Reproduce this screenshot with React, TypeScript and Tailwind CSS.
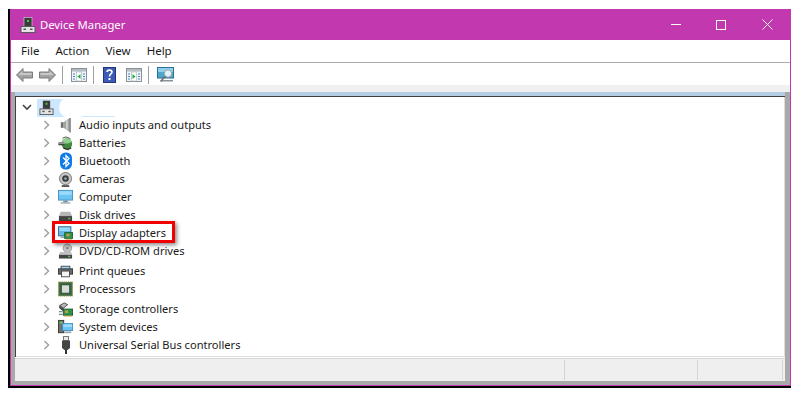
const font = { fontFamily: '"Noto Sans", "Open Sans", sans-serif' };

function Chevron() {
  return (
    <svg width="8" height="10" viewBox="0 0 8 10" className="shrink-0">
      <path d="M1.5 1 L5.5 5 L1.5 9" fill="none" stroke="#a6a6a6" strokeWidth="1.6" />
    </svg>
  );
}

function HostIcon({ size = 16 }: { size?: number }) {
  return (
    <svg width={size} height={size} viewBox="0 0 16 16">
      <rect x="4" y="0.5" width="8" height="9.5" fill="#3a3a3a" stroke="#d8d8d8" strokeWidth="0.6" />
      <rect x="7" y="3" width="2" height="2" fill="#46d246" />
      <rect x="1" y="9.5" width="14" height="6" fill="#e4e4e4" stroke="#5a5a5a" />
      <rect x="3.5" y="11.5" width="2.5" height="1.5" fill="#555" />
      <rect x="10" y="11.5" width="2.5" height="1.5" fill="#555" />
    </svg>
  );
}

function Speaker() {
  return (
    <svg width="16" height="18" viewBox="0 0 16 18">
      <rect x="3" y="6" width="3" height="6" fill="#6f6f6f" />
      <path d="M6 6 L13 1 V17 L6 12 Z" fill="#a2a2a2" />
      <path d="M9.5 4 V14" stroke="#dcdcdc" strokeWidth="1.6" />
      <path d="M13 1 V17" stroke="#666" />
    </svg>
  );
}

function Battery() {
  return (
    <svg width="17" height="17" viewBox="0 0 17 17">
      <ellipse cx="10" cy="9" rx="6" ry="6.5" fill="#3f8a3f" />
      <ellipse cx="10" cy="5.5" rx="5" ry="3" fill="#8fd08f" />
      <path d="M5 2.5 L9 1 L14 3" stroke="#444" fill="none" />
      <rect x="0.5" y="7" width="7" height="3.5" fill="#444" />
      <path d="M0.5 8 H8" stroke="#e2e2e2" />
      <path d="M6 13.5 L11 15.5 L15 13.5" stroke="#333" fill="none" strokeWidth="1.4" />
    </svg>
  );
}

function BluetoothIcon() {
  return (
    <svg width="14" height="18" viewBox="0 0 14 18">
      <rect x="1" y="0.5" width="12" height="17" rx="5.5" fill="#0f7be8" />
      <path d="M4 5.5 L10 11.5 L7 14.5 V3.5 L10 6.5 L4 12.5" fill="none" stroke="#fff" strokeWidth="1.3" />
    </svg>
  );
}

function Camera() {
  return (
    <svg width="15" height="17" viewBox="0 0 16 17">
      <circle cx="8" cy="7.5" r="6.5" fill="#c6c6c6" stroke="#777" />
      <circle cx="8" cy="7.5" r="3.5" fill="#3b3b3b" />
      <circle cx="8" cy="7.5" r="1.5" fill="#8fa3b5" />
      <path d="M4 15.5 H12" stroke="#555" strokeWidth="2" />
    </svg>
  );
}

function Computer() {
  return (
    <svg width="17" height="16" viewBox="0 0 17 16">
      <rect x="0.5" y="0.5" width="16" height="11" fill="#6cc4f2" stroke="#3f8fc0" />
      <rect x="1.5" y="1.5" width="14" height="4" fill="#9cdcfa" />
      <rect x="6" y="12" width="5" height="2" fill="#7a8a96" />
      <rect x="3" y="14" width="11" height="1.5" fill="#9aa7b0" />
    </svg>
  );
}

function Disk() {
  return (
    <svg width="16" height="12" viewBox="0 0 16 12" className="mt-[4px]">
      <path d="M3 0.5 H13 L15 5 H1 Z" fill="#b5b5b5" />
      <rect x="1" y="5" width="14" height="6.5" fill="#444" />
      <rect x="11" y="7" width="2" height="1.5" fill="#5cd65c" />
    </svg>
  );
}

function Display() {
  return (
    <svg width="18" height="16" viewBox="0 0 18 16">
      <rect x="0.5" y="0.5" width="15" height="11" fill="#62b8e8" stroke="#2f5f85" />
      <rect x="1.5" y="1.5" width="13" height="4" fill="#97d8f8" />
      <rect x="3" y="12" width="8" height="2" fill="#9aa7b0" />
      <rect x="8" y="7.5" width="9.5" height="7" fill="#2f8f4f" stroke="#1c5c30" />
      <rect x="10" y="9" width="4" height="3" fill="#c2a23c" />
      <path d="M9 15.5 H17" stroke="#c9a83f" />
    </svg>
  );
}

function Dvd() {
  return (
    <svg width="16" height="17" viewBox="0 0 16 17">
      <circle cx="10" cy="5" r="4.5" fill="#c6c6c6" stroke="#999" />
      <circle cx="10" cy="5" r="1.2" fill="#777" />
      <path d="M2 9 H14 L15 12 H1 Z" fill="#c0c0c0" />
      <rect x="1" y="12" width="14" height="4" fill="#444" />
      <rect x="11" y="13" width="2" height="1.5" fill="#5cd65c" />
    </svg>
  );
}

function Printer() {
  return (
    <svg width="17" height="13" viewBox="0 0 17 13">
      <rect x="3.5" y="0.5" width="10" height="4" fill="#9cd4f0" stroke="#444" />
      <rect x="0.5" y="3.5" width="16" height="6" fill="#6a6a6a" stroke="#333" />
      <rect x="4" y="6" width="9" height="6.5" fill="#f4f4f4" stroke="#444" />
    </svg>
  );
}

function Processor() {
  return (
    <svg width="16" height="16" viewBox="0 0 16 16">
      <rect x="0.5" y="0.5" width="15" height="15" fill="#4d7a55" stroke="#a08c3c" strokeDasharray="1.2 0.8" />
      <rect x="1.5" y="1.5" width="13" height="13" fill="#3c6a48" />
      <rect x="3.5" y="3.5" width="9" height="9" fill="#d6dcd6" stroke="#2c4a34" />
    </svg>
  );
}

function Storage() {
  return (
    <svg width="17" height="17" viewBox="0 0 17 17">
      <path d="M2 4 L7 1 L11 3 L6 7 Z" fill="#b8b8b8" stroke="#444" />
      <path d="M2 4 V7 L6 10 V7" fill="#555" stroke="#333" />
      <rect x="6" y="8" width="10.5" height="7" fill="#2f8f4f" stroke="#1c5c30" />
      <rect x="8" y="9.5" width="3.5" height="3" fill="#c2a23c" />
      <path d="M7 16 H16" stroke="#c9a83f" />
      <path d="M1 11 H5 M1 14 H5" stroke="#555" />
    </svg>
  );
}

function SystemIcon() {
  return (
    <svg width="17" height="16" viewBox="0 0 17 16">
      <rect x="0.5" y="0.5" width="6" height="14" fill="#707070" stroke="#333" />
      <rect x="2" y="2" width="3" height="2" fill="#5cd65c" />
      <rect x="5" y="4" width="11.5" height="8" fill="#6cc4f2" stroke="#3f8fc0" />
      <rect x="6" y="5" width="10" height="3" fill="#9cdcfa" />
      <rect x="7" y="13" width="8" height="2" fill="#9aa7b0" />
    </svg>
  );
}

function Usb() {
  return (
    <svg width="10" height="18" viewBox="0 0 10 18">
      <rect x="2.5" y="0.5" width="5" height="4" fill="#e8e8e8" stroke="#777" />
      <path d="M1 4.5 H9 V12 L6.5 14 H3.5 L1 12 Z" fill="#454545" />
      <rect x="4" y="14" width="2" height="4" fill="#333" />
    </svg>
  );
}

function Arrow({ flip }: { flip?: boolean }) {
  return (
    <svg width="17" height="14" viewBox="0 0 17 14" style={{ transform: flip ? "scaleX(-1)" : undefined }}>
      <path d="M0.5 7 L7 0.5 V4 H16.5 V10 H7 V13.5 Z" fill="#a2a2a2" stroke="#7c7c7c" />
      <path d="M2.5 7 L6.5 3 V5 H15.5 V7 Z" fill="#c8c8c8" />
    </svg>
  );
}

function PaneIcon({ right }: { right?: boolean }) {
  return (
    <svg width="16" height="14" viewBox="0 0 16 14">
      <rect x="0.5" y="0.5" width="15" height="13" fill="#eef3f6" stroke="#8a9299" />
      <rect x="1" y="1" width="14" height="2.5" fill="#b5bcc2" />
      <rect x="5.5" y="4" width="5" height="9" fill="#fff" stroke="#a8b0b6" strokeWidth="0.6" />
      <path d="M2 6 H4 M2 8.5 H4 M2 11 H4 M12 6 H14 M12 8.5 H14 M12 11 H14" stroke="#4a87c0" />
      {right ? <path d="M6.5 6 L9.5 8.5 L6.5 11 Z" fill="#1faa3c" /> : <path d="M9.5 6 L6.5 8.5 L9.5 11 Z" fill="#1faa3c" />}
    </svg>
  );
}

function HelpIcon() {
  return (
    <svg width="13" height="16" viewBox="0 0 13 16">
      <rect x="0.5" y="0.5" width="12" height="15" fill="#3b5bb5" stroke="#24357a" />
      <path d="M4 5 C4 2.5 9 2.5 9 5 C9 7 6.5 7 6.5 9.5" fill="none" stroke="#fff" strokeWidth="1.6" />
      <rect x="5.5" y="11" width="2" height="2" fill="#fff" />
    </svg>
  );
}

function ScanIcon() {
  return (
    <svg width="17" height="16" viewBox="0 0 17 16">
      <rect x="0.5" y="0.5" width="16" height="10.5" fill="#4ea6cc" stroke="#2b6f92" />
      <rect x="1" y="1" width="15" height="4" fill="#8fd0ec" />
      <rect x="4" y="13" width="12" height="1.5" fill="#8a9299" />
      <circle cx="11" cy="6.5" r="3.7" fill="#dff3fb" stroke="#9a9a9a" strokeWidth="0.9" />
      <path d="M8.3 9.2 L3.5 14.5" stroke="#6e6e6e" strokeWidth="1.6" />
    </svg>
  );
}

const Sep = () => <div className="w-px h-[18px] bg-[#a0a0a0]" />;

const rows: { label: string; icon: React.ReactNode; extra?: boolean }[] = [
  { label: "Audio inputs and outputs", icon: <Speaker /> },
  { label: "Batteries", icon: <Battery /> },
  { label: "Bluetooth", icon: <BluetoothIcon /> },
  { label: "Cameras", icon: <Camera /> },
  { label: "Computer", icon: <Computer /> },
  { label: "Disk drives", icon: <Disk /> },
  { label: "Display adapters", icon: <Display /> },
  { label: "DVD/CD-ROM drives", icon: <Dvd /> },
  { label: "Print queues", icon: <Printer />, extra: true },
  { label: "Processors", icon: <Processor /> },
  { label: "Storage controllers", icon: <Storage />, extra: true },
  { label: "System devices", icon: <SystemIcon /> },
  { label: "Universal Serial Bus controllers", icon: <Usb /> },
];

export default function App() {
  return (
    <div className="w-[800px] h-[400px] bg-white pl-[8px] pt-[9px] overflow-hidden" style={font}>
      <div className="relative w-[783px] h-[379px] flex flex-col border-l-2 border-b-2 border-black">
        <div className="h-[31px] bg-[#c238ae] flex items-center text-white text-[11.25px] pl-[10px]">
          <HostIcon />
          <span className="ml-[4px] pt-[2px]">Device Manager</span>
          <div className="ml-auto flex items-center">
            <div className="w-[10px] h-px bg-white mr-[35px]" />
            <div className="w-[10px] h-[10px] border border-white mr-[36px]" />
            <svg width="11" height="11" viewBox="0 0 11 11" className="mr-[18px]">
              <path d="M0.5 0.5 L10.5 10.5 M10.5 0.5 L0.5 10.5" stroke="#fff" />
            </svg>
          </div>
        </div>
        <div className="flex-1 flex flex-col border-l border-r border-b border-[#c238ae]">
          <div className="h-[22px] bg-white flex items-center text-[11.5px] text-[#1a1a1a] border-b border-[#ababab] box-content pl-[10px] gap-[16px]">
            <span>File</span>
            <span>Action</span>
            <span>View</span>
            <span>Help</span>
          </div>
          <div className="h-[22px] bg-white flex items-center pl-[5px] pt-[2px]">
            <Arrow />
            <div className="w-[6px]" />
            <Arrow flip />
            <div className="w-[6px]" />
            <Sep />
            <div className="w-[8px]" />
            <PaneIcon />
            <div className="w-[6px]" />
            <Sep />
            <div className="w-[9px]" />
            <HelpIcon />
            <div className="w-[10px]" />
            <PaneIcon right />
            <div className="w-[6px]" />
            <Sep />
            <div className="w-[8px]" />
            <ScanIcon />
          </div>
          <div className="h-[7px] bg-[#f0f0f0]" />
          <div className="flex-1 bg-[#a9a9a9] flex flex-col pl-[4px] pr-[5px] pb-[4px]">
            <div className="h-[4px] bg-[#b4cde4]" />
            <div className="h-[261px] bg-white border-t border-l border-[#404040] border-r-0 relative overflow-hidden">
              <div className="h-[19px] flex items-center pt-[2px]">
                <svg width="10" height="7" viewBox="0 0 10 7" className="ml-[6px]">
                  <path d="M1 1 L5 5 L9 1" fill="none" stroke="#444" strokeWidth="1.6" />
                </svg>
                <div className="relative ml-[5px] w-[78px] h-[18px] bg-[#cce8ff] flex items-center pl-[2px]">
                  <HostIcon size={15} />
                  <div className="absolute left-[40px] right-0 top-0 bottom-px bg-white" />
                  <div className="absolute left-[22px] top-[-2px] w-[28px] h-[21px] rounded-full bg-white blur-[0.5px]" />
                </div>
              </div>
              {rows.map((r) => (
                <div key={r.label} className={`h-[18px] flex items-center text-[11.1px] text-[#1a1a1a] ${r.extra ? "mt-[2px]" : ""}`}>
                  <div className="ml-[27px] w-[8px]"><Chevron /></div>
                  <div className="ml-[7px] w-[15px] flex justify-center">{r.icon}</div>
                  <span className="ml-[6px] whitespace-nowrap">{r.label}</span>
                </div>
              ))}
              <div className="absolute bottom-0 right-0 w-px h-full bg-[#dcdcdc]" />
              <div className="absolute bottom-0 left-0 w-full h-px bg-[#dcdcdc]" />
            </div>
            <div className="h-px bg-white" />
            <div className="flex-1 bg-[#efefef] border-t border-[#d6d6d6] flex items-center">
              <div className="w-[549px]" />
              <div className="w-px h-[20px] bg-[#d4d4d4]" />
              <div className="w-[132px]" />
              <div className="w-px h-[20px] bg-[#d4d4d4]" />
              <div className="w-[84px]" />
              <div className="w-px h-[20px] bg-[#d4d4d4]" />
            </div>
          </div>
        </div>
        <div className="absolute left-[42px] top-[212px] w-[123px] h-[22px] border-[3px] border-[#f00000] shadow-[2px_2px_4px_rgba(0,0,0,0.45)]" />
      </div>
    </div>
  );
}
